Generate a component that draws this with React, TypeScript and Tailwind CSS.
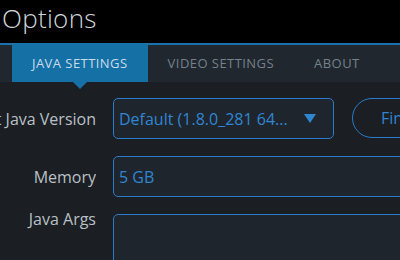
import {FC} from 'react';

const tabs = ['Java Settings', 'Video Settings', 'About'];

const Tab: FC<{label: string; active?: boolean}> = ({label, active}) => (
  <div
    className={`relative flex items-center px-[20px] text-[13px] uppercase tracking-[0.45px] ${
      active ? 'bg-[#1570a6] text-[#c9dcea]' : 'text-[#75818c]'
    }`}>
    {label}
    {active && (
      <span className="absolute left-1/2 top-full -translate-x-1/2 border-x-[7px] border-t-[7px] border-x-transparent border-t-[#1570a6]" />
    )}
  </div>
);

const Label: FC<{text: string}> = ({text}) => (
  <div className="w-[96px] shrink-0 flex items-center justify-end overflow-hidden whitespace-nowrap text-[16px] text-[#b9c0c7]">
    {text}
  </div>
);

export default function App() {
  return (
    <div className="w-[400px] h-[260px] overflow-hidden bg-[#1b1e22] font-['Open_Sans',sans-serif]">
      <header className="h-[45px] bg-black border-b-2 border-[#1a72ad] pl-[2px] pt-[1px]">
        <h1 className="text-[26px] font-light leading-[34px] text-[#d2d6da] tracking-[0.3px]">
          Options
        </h1>
      </header>
      <nav className="h-[37px] bg-[#20272e] flex pl-[12px]">
        {tabs.map((t, i) => (
          <Tab key={t} label={t} active={i === 0} />
        ))}
      </nav>
      <main className="pt-[16px] flex flex-col gap-[17px]">
        <div className="flex gap-[17px] h-[41px]">
          <Label text="Select Java Version" />
          <div className="w-[221px] shrink-0 flex items-center justify-between rounded-[5px] border border-[#2a7ccb] bg-[#1f252c] pl-[5px] pr-[17px] text-[16px] text-[#3085d3] whitespace-nowrap">
            <span>Default (1.8.0_281 64...</span>
            <span className="border-x-[6px] border-t-[9px] border-x-transparent border-t-[#3085d3]" />
          </div>
          <button className="ml-px shrink-0 w-[120px] h-[40px] rounded-full border border-[#2a7ccb] text-left pl-[28px] text-[16px] text-[#3085d3] whitespace-nowrap">
            Find
          </button>
        </div>
        <div className="flex gap-[17px] h-[41px]">
          <Label text="Memory" />
          <div className="flex-1 -mr-[10px] flex items-center rounded-[5px] border border-[#2a7ccb] bg-[#1f252c] pl-[5px] text-[16px] text-[#3085d3]">
            5 GB
          </div>
        </div>
        <div className="flex gap-[17px]">
          <div className="w-[96px] shrink-0 flex justify-end text-[16px] text-[#b9c0c7] -mt-[7px] leading-[24px]">
            Java Args
          </div>
          <div className="flex-1 -mr-[10px] h-[80px] rounded-[5px] border border-[#2a7ccb] bg-[#1f252c]" />
        </div>
      </main>
    </div>
  );
}
